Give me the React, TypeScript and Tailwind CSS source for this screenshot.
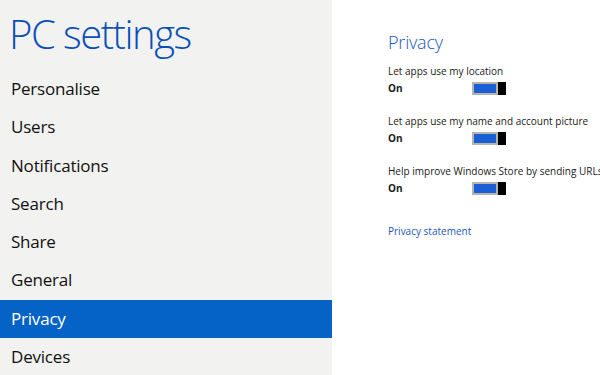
import React from "react";

const items = ["Personalise", "Users", "Notifications", "Search", "Share", "General", "Privacy", "Devices"];

function Toggle() {
  return (
    <div className="flex h-[13px] w-[34px]">
      <div className="h-full w-[26px] border-2 border-[#b9b3ad] bg-[#1a5fd6]" />
      <div className="h-full w-[8px] bg-black" />
    </div>
  );
}

function Setting({ label }: { label: string }) {
  return (
    <div className="flex flex-col">
      <div className="h-[17px] whitespace-nowrap text-[10px] leading-[17px] text-[#1a1a1a]">{label}</div>
      <div className="flex h-[17px] items-center">
        <div className="w-[84px] text-[10px] font-bold leading-[17px] text-[#1a1a1a]">On</div>
        <Toggle />
      </div>
    </div>
  );
}

export default function App() {
  return (
    <div className="flex h-[375px] w-[600px] overflow-hidden bg-white" style={{ fontFamily: '"Open Sans", "Noto Sans", sans-serif' }}>
      <div className="flex w-[332px] shrink-0 flex-col overflow-hidden bg-[#f2f2f0]">
        <div className="h-[70px] shrink-0 pl-[9px] pt-[9px] text-[40px] font-light leading-[50px] tracking-[-1.5px] text-[#0b4fb8]">PC settings</div>
        <div className="flex shrink-0 flex-col">
          {items.map((it) => (
            <div
              key={it}
              className={
                "h-[38.3px] shrink-0 pl-[11px] text-[17px] leading-[38px] tracking-[-0.2px] " +
                (it === "Privacy" ? "bg-[#0563c8] text-white" : "text-[#111]")
              }
            >
              {it}
            </div>
          ))}
        </div>
      </div>
      <div className="flex flex-1 flex-col overflow-hidden pl-[56px] pt-[29px]">
        <div className="h-[34px] text-[18px] font-light leading-[26px] tracking-[-0.2px] text-[#1a5ab8]">Privacy</div>
        <div className="flex flex-col gap-[16px]">
          <Setting label="Let apps use my location" />
          <Setting label="Let apps use my name and account picture" />
          <Setting label="Help improve Windows Store by sending URLs that apps use" />
        </div>
        <div className="mt-[26px] text-[10px] leading-[17px] text-[#1a57b8]">Privacy statement</div>
      </div>
    </div>
  );
}
